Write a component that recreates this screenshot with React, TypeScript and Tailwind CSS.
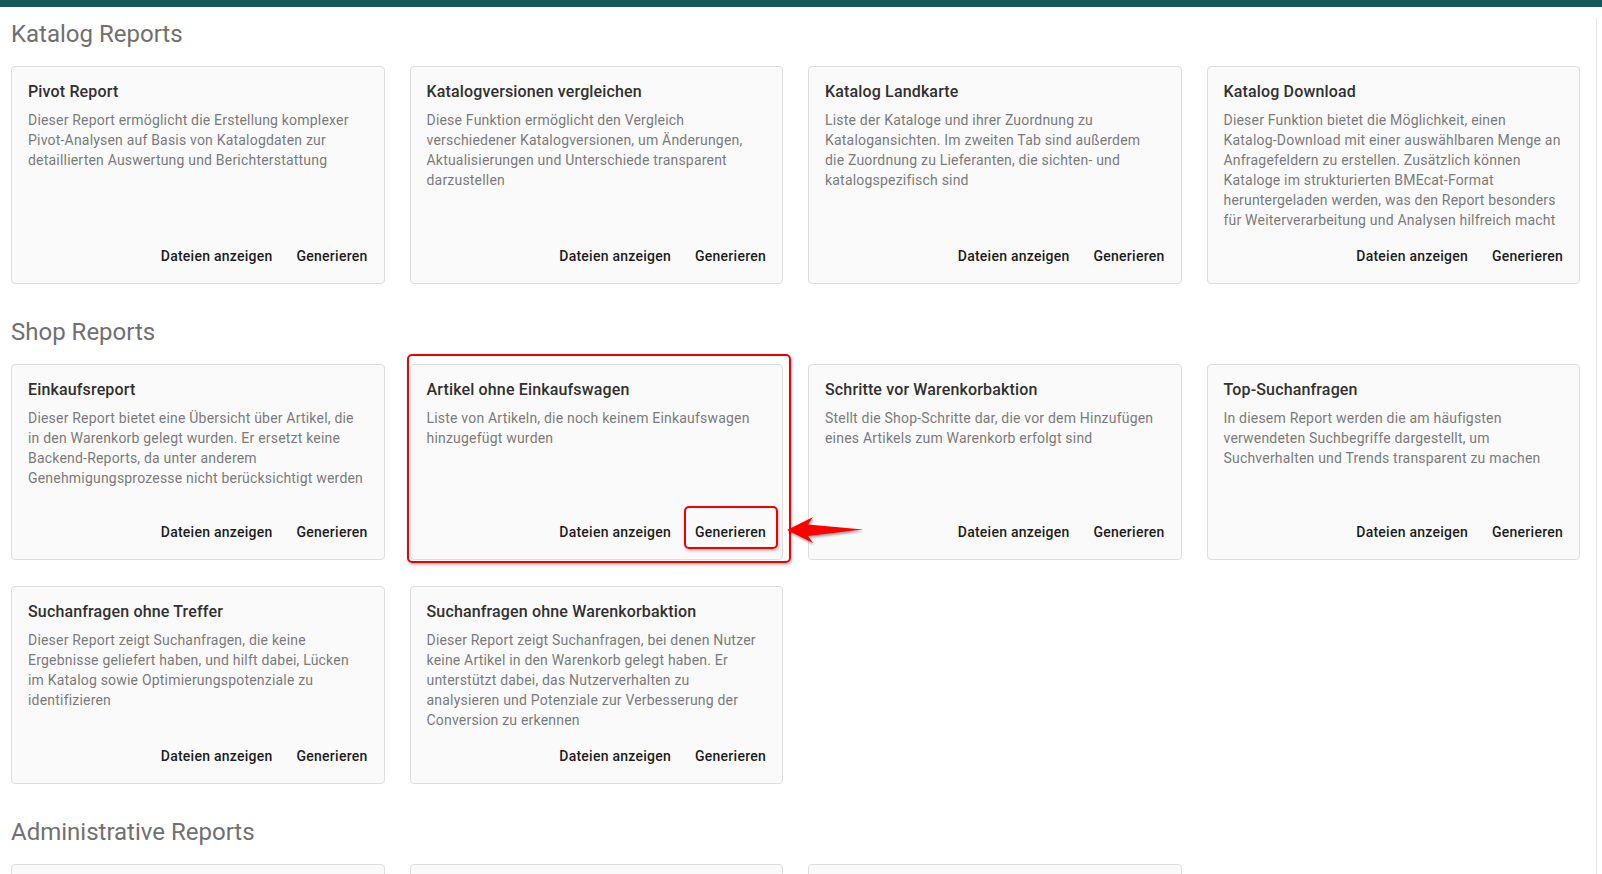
import React from "react";

type Report = {
  title: string;
  text: React.ReactNode;
  marked?: boolean;
};

const katalog: Report[] = [
  {
    title: "Pivot Report",
    text: "Dieser Report ermöglicht die Erstellung komplexer Pivot-Analysen auf Basis von Katalogdaten zur detaillierten Auswertung und Berichterstattung",
  },
  {
    title: "Katalogversionen vergleichen",
    text: "Diese Funktion ermöglicht den Vergleich verschiedener Katalogversionen, um Änderungen, Aktualisierungen und Unterschiede transparent darzustellen",
  },
  {
    title: "Katalog Landkarte",
    text: "Liste der Kataloge und ihrer Zuordnung zu Katalogansichten. Im zweiten Tab sind außerdem die Zuordnung zu Lieferanten, die sichten- und katalogspezifisch sind",
  },
  {
    title: "Katalog Download",
    text: (
      <>
        Dieser Funktion bietet die Möglichkeit, einen <span className="whitespace-nowrap">Katalog-Download</span> mit
        einer auswählbaren Menge an Anfragefeldern zu erstellen. Zusätzlich können Kataloge im strukturierten
        BMEcat-Format heruntergeladen werden, was den Report besonders für Weiterverarbeitung und Analysen hilfreich
        macht
      </>
    ),
  },
];

const shop: Report[] = [
  {
    title: "Einkaufsreport",
    text: "Dieser Report bietet eine Übersicht über Artikel, die in den Warenkorb gelegt wurden. Er ersetzt keine Backend-Reports, da unter anderem Genehmigungsprozesse nicht berücksichtigt werden",
  },
  {
    title: "Artikel ohne Einkaufswagen",
    text: "Liste von Artikeln, die noch keinem Einkaufswagen hinzugefügt wurden",
    marked: true,
  },
  {
    title: "Schritte vor Warenkorbaktion",
    text: "Stellt die Shop-Schritte dar, die vor dem Hinzufügen eines Artikels zum Warenkorb erfolgt sind",
  },
  {
    title: "Top-Suchanfragen",
    text: "In diesem Report werden die am häufigsten verwendeten Suchbegriffe dargestellt, um Suchverhalten und Trends transparent zu machen",
  },
  {
    title: "Suchanfragen ohne Treffer",
    text: "Dieser Report zeigt Suchanfragen, die keine Ergebnisse geliefert haben, und hilft dabei, Lücken im Katalog sowie Optimierungspotenziale zu identifizieren",
  },
  {
    title: "Suchanfragen ohne Warenkorbaktion",
    text: "Dieser Report zeigt Suchanfragen, bei denen Nutzer keine Artikel in den Warenkorb gelegt haben. Er unterstützt dabei, das Nutzerverhalten zu analysieren und Potenziale zur Verbesserung der Conversion zu erkennen",
  },
];

// red arrow from the annotation, tip on the left
const Arrow = () => (
  <svg
    width="84"
    height="30"
    viewBox="0 0 84 30"
    className="absolute left-[374px] top-[150px] z-10 drop-shadow-[1px_2px_1px_rgba(0,0,0,0.35)]"
  >
    <polygon points="2,15 28,2 23,9.5 78,14.5 23,21 28,28" fill="#ff0000" />
  </svg>
);

const Card = ({ r }: { r: Report }) => (
  <div className="relative flex min-h-[196px] flex-col rounded border border-[#dedede] bg-[#fafafa]">
    <div className="flex flex-1 flex-col px-4 pt-[13px]">
      <h3 className="text-[16px] leading-6 font-medium tracking-[0.15px] text-[#303030]">{r.title}</h3>
      <p className="mt-[6px] mr-[2px] flex-1 text-[14px] leading-5 tracking-[0.2px] text-[#7a7a7a]">{r.text}</p>
    </div>
    <div className="flex justify-end gap-2 px-2 pt-2 pb-[9px]">
      <button className="h-9 rounded px-2 text-[14px] font-medium tracking-[0.25px] text-[#1c1c1c]">
        Dateien anzeigen
      </button>
      <button className="h-9 rounded px-2 text-[14px] font-medium tracking-[0.25px] text-[#1c1c1c]">
        Generieren
      </button>
    </div>
    {r.marked && (
      <>
        <div className="pointer-events-none absolute -top-[11px] -left-[4px] -right-[9px] -bottom-[4px] z-10 rounded-[5px] border-2 border-[#f00000] shadow-[1px_2px_3px_rgba(0,0,0,0.25)]" />
        <div className="pointer-events-none absolute right-[4px] bottom-[10px] z-10 h-[43px] w-[94px] rounded-[5px] border-2 border-[#f00000] shadow-[1px_2px_3px_rgba(0,0,0,0.25)]" />
        <Arrow />
      </>
    )}
  </div>
);

const Section = ({ title, items, first }: { title: string; items: Report[]; first?: boolean }) => (
  <section className={first ? "mt-[11px]" : "mt-8"}>
    <h2 className="mb-4 text-[24px] leading-8 font-normal text-[#707070]">{title}</h2>
    <div className="grid grid-cols-4 gap-x-[25px] gap-y-[26px]">
      {items.map((r) => (
        <Card key={r.title} r={r} />
      ))}
    </div>
  </section>
);

export default function App() {
  return (
    <div className="h-[874px] overflow-hidden bg-white font-['Roboto',sans-serif]">
      <div className="h-[7px] bg-[#14595b]" />
      <div className="w-[1597px] border-r border-[#e6e6e6] pl-[11px] pr-[16px] pb-10">
        <Section title="Katalog Reports" items={katalog} first />
        <Section title="Shop Reports" items={shop} />
        <section className="mt-8">
          <h2 className="mb-4 text-[24px] leading-8 font-normal text-[#707070]">Administrative Reports</h2>
          <div className="grid grid-cols-4 gap-x-[25px]">
            <div className="h-[196px] rounded border border-[#dedede] bg-[#fafafa]" />
            <div className="h-[196px] rounded border border-[#dedede] bg-[#fafafa]" />
            <div className="h-[196px] rounded border border-[#dedede] bg-[#fafafa]" />
          </div>
        </section>
      </div>
    </div>
  );
}
